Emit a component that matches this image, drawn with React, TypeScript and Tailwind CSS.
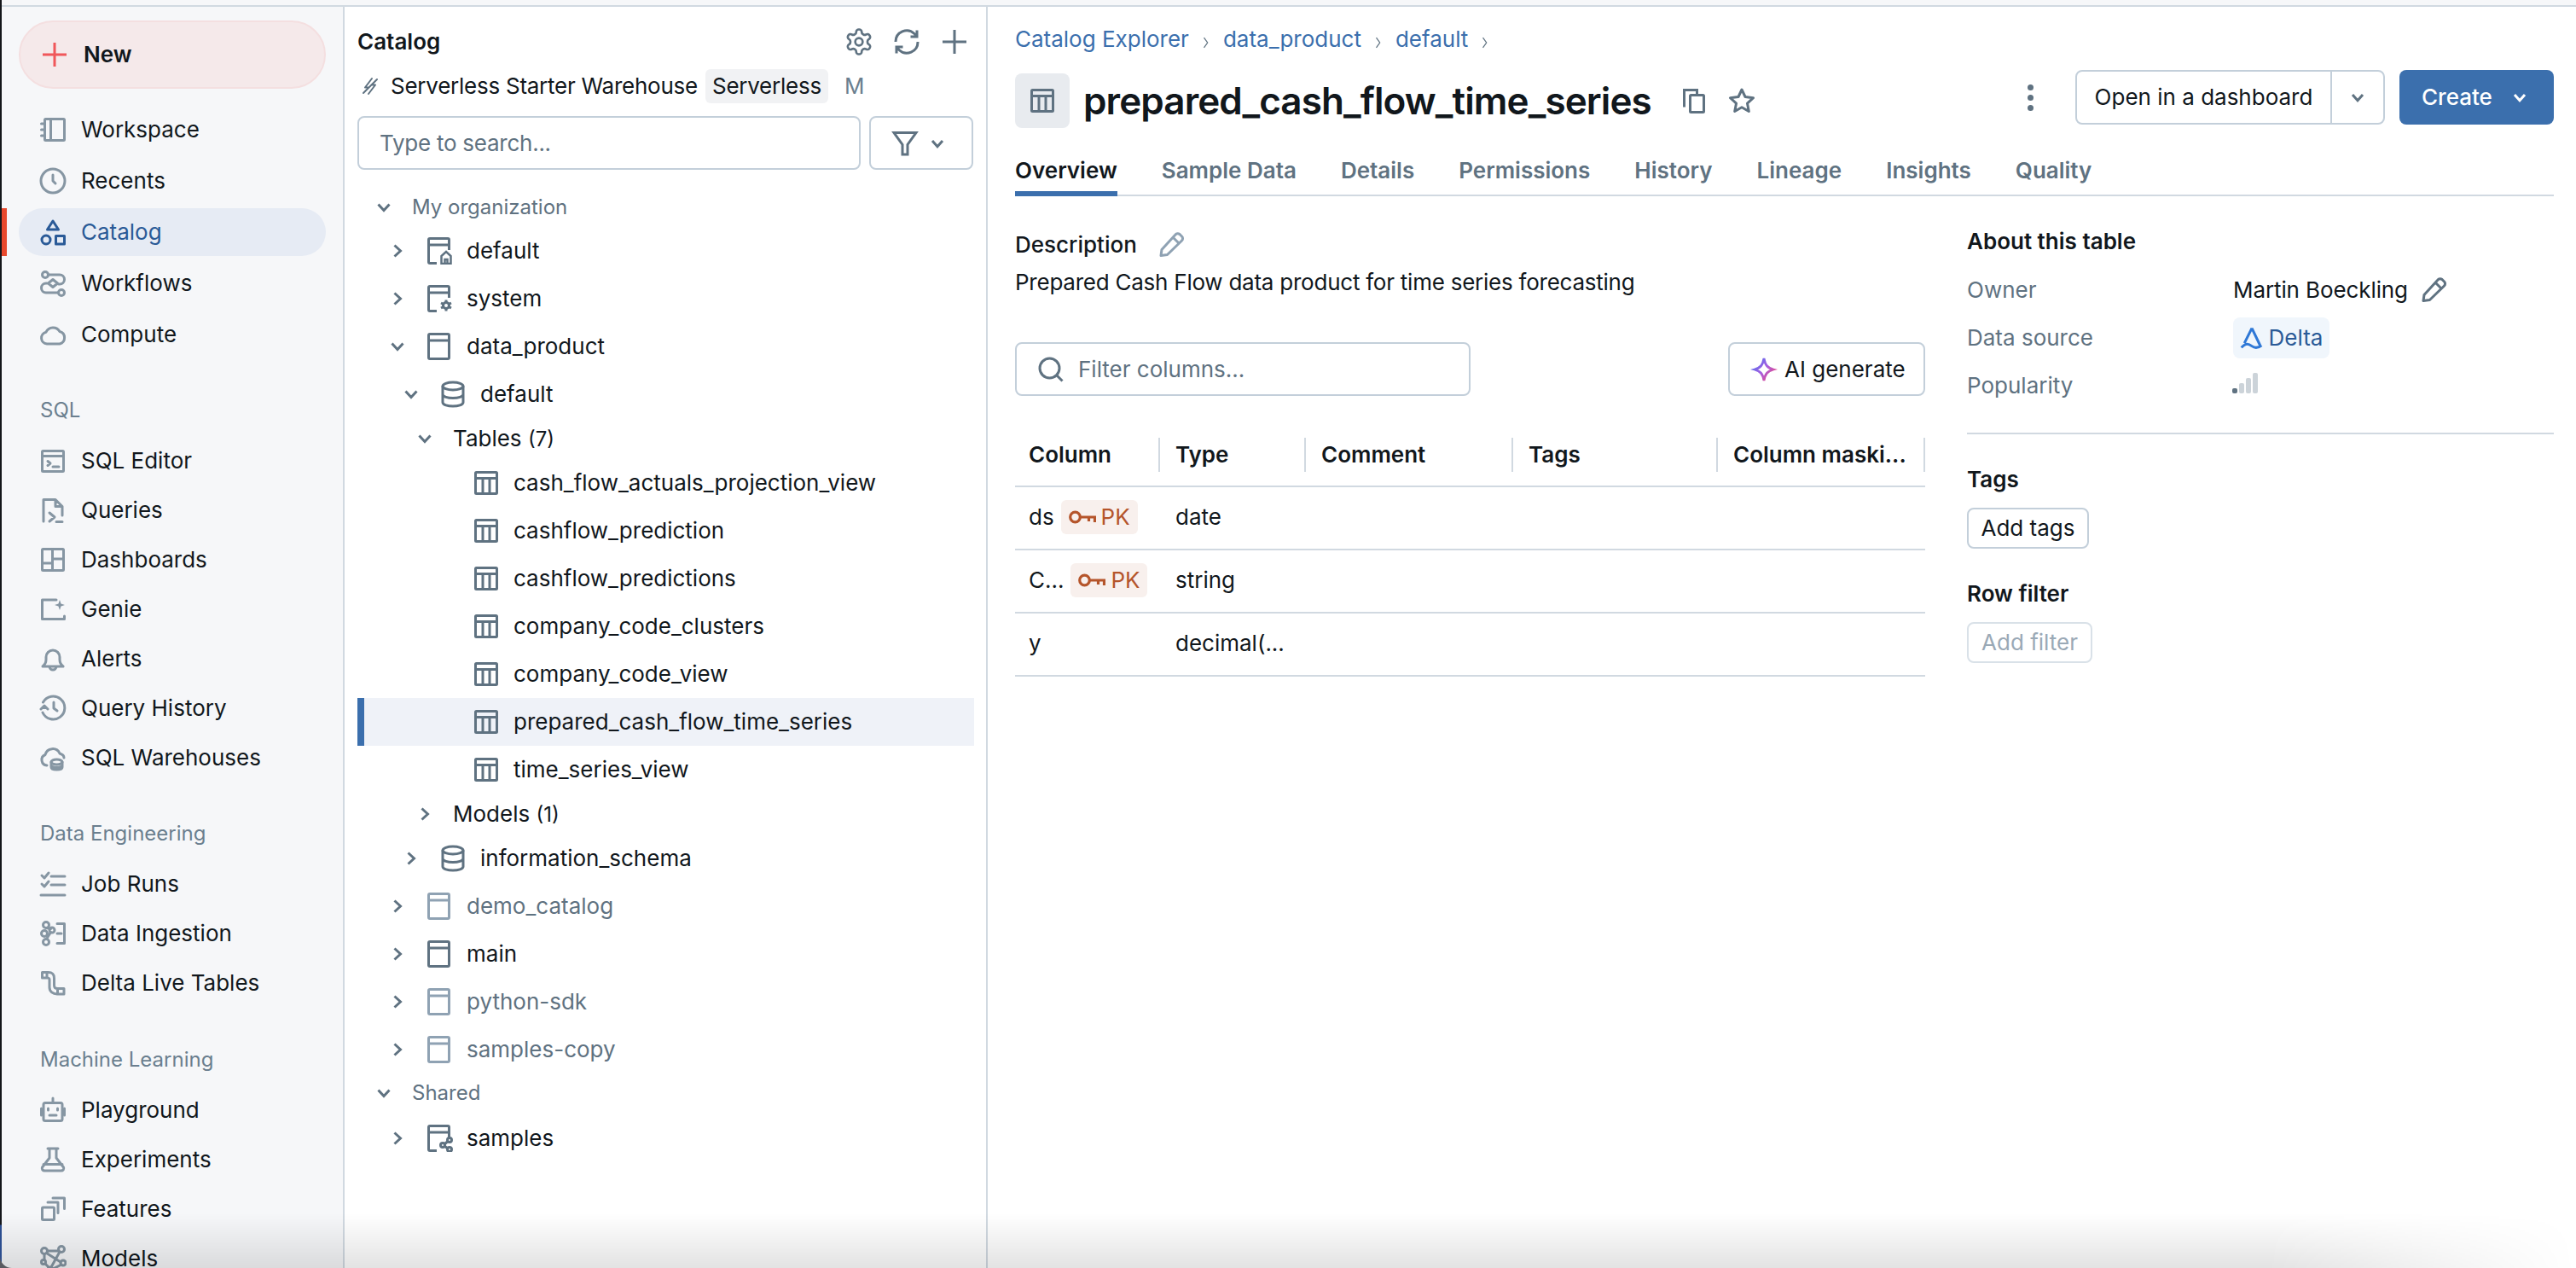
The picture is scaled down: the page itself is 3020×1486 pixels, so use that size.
import React from "react";

const cl = "fill-none stroke-current [stroke-width:3] [stroke-linecap:round] [stroke-linejoin:round]";
function I({ children, className = "" }: { children: React.ReactNode; className?: string }) {
  return (
    <svg viewBox="0 0 32 32" className={`w-8 h-8 shrink-0 ${cl} ${className}`}>
      {children}
    </svg>
  );
}

const Workspace = () => <I><rect x="6.5" y="3.5" width="23" height="25" rx="1" /><path d="M13.5 3.5v25M2.5 9h4M2.5 16h4M2.5 23h4" /></I>;
const Recents = () => <I><circle cx="16" cy="16" r="14" /><path d="M16 9v7l3 3" /></I>;
const CatalogI = () => <I><path d="M16 3l6.5 10h-13zM19.5 20.5h10v9.500h-10z" /><circle cx="8" cy="25" r="5" /></I>;
const Workflows = () => <I><circle cx="7" cy="6" r="3.500" /><circle cx="26" cy="27" r="3.500" /><path d="M10.500 6H24a5.500 5.500 0 0 1 0 11h-1M22 27H8a5.500 5.500 0 0 1 0-11h1M16 11.500l5.500 4.500-5.500 4.500-5.500-4.500z" /></I>;
const Compute = () => <I><path d="M9 27a7 7 0 0 1-1-13.800A9 9 0 0 1 24 12.500 7.500 7.500 0 0 1 24 27z" /></I>;
const SqlEditor = () => <I><rect x="3.500" y="4.500" width="25" height="24" rx="1" /><path d="M3.500 10.500h25M10 16.500l3 2.500-3 2.500M16 23h7" /></I>;
const Queries = () => <I><path d="M5 29V3.500h14l8 8V22M19 3.500v8h8M12 19l6 5-6 5M20 29.500h7" /></I>;
const Dashboards = () => <I><rect x="3.500" y="3.500" width="25" height="25" rx="1" /><path d="M15.500 3.500v25M15.500 15h13M3.500 20h12" /></I>;
const Genie = () => <I><path d="M20 5H3.500v22.500h26V24" /><path d="M24 5l1.500 4.500L30 11l-4.500 1.500L24 17l-1.500-4.500L18 11l4.500-1.500z" className="fill-current stroke-none" /></I>;
const Alerts = () => <I><path d="M4 25c2.500-2 4-4 4-8v-3a8 8 0 0 1 16 0v3c0 4 1.500 6 4 8zM12 25a4 4 0 0 0 8 0" /></I>;
const History = () => <I><path d="M4.500 9A13.500 13.500 0 1 1 4 21" /><path d="M2 17l4-4 4 4" className="fill-current" /><path d="M17 9v7l4 3" /></I>;
const Warehouses = () => <I><path d="M9 25a6.500 6.500 0 0 1-2-12.500A9 9 0 0 1 24 11c3 1 5 3 5 5" /><ellipse cx="20.500" cy="21" rx="6.500" ry="3" /><path d="M14 21v6c0 4 13 4 13 0v-6M14 25c0 3 13 3 13 0" /></I>;
const JobRuns = () => <I><path d="M14 7h16M14 17h16M2 29h28M3 6l3 3 5-6M3 16l3 3 5-6" /></I>;
const Ingestion = () => <I><circle cx="8" cy="6" r="3.500" /><circle cx="8" cy="26" r="3.500" /><circle cx="6" cy="16" r="3.500" /><circle cx="15" cy="12" r="3" /><path d="M8.500 9.500l5 1M8.500 22.500l5-8M21 4.500h8.500v23H21M21 16h5" /></I>;
const Dlt = () => <I><path d="M3.500 3.500h7c5 0 7 2 7 7v8c0 3 1 4 4 4H29v6.500h-8c-5 0-9-3-9-8v-9c0-2-1-2-3-2H3.500zM9 3.500v6M21.500 22.500v6.500" /></I>;
const Playground = () => <I><rect x="5" y="7.500" width="22" height="21" rx="2" /><path d="M16 2v5M2.500 14v8M29.500 14v8M12 22h8" /><path d="M10.500 14v2M21.500 14v2" /></I>;
const Experiments = () => <I><path d="M10 3h12M12 3v11L3.500 25c-1 2 .5 4 3 4h19c2.500 0 4-2 3-4L20 14V3M5 21.500h22" /></I>;
const Features = () => <I><rect x="3.500" y="14" width="14" height="14.500" rx="1" /><path d="M10 8h12v12.500M16 3h13.500v12.500" /></I>;
const Models = () => <I><circle cx="6" cy="7" r="3.500" /><circle cx="26" cy="5" r="3.500" /><circle cx="5" cy="20" r="2.500" /><circle cx="13" cy="29" r="3" /><circle cx="28" cy="21" r="3" /><path d="M9.500 7h13M8.500 9.500L25 20M24 8l-10 18M6 17V11M7 22l4 4M16 28l10-5" /></I>;

function NavItem({ icon, label }: { icon: React.ReactNode; label: string }) {
  return (
    <div className="flex items-center gap-[17px] h-[58px] pl-[44px] text-[#11171c]">
      <span className="text-[#8696a3] flex">{icon}</span>
      <span>{label}</span>
    </div>
  );
}

function SectionLabel({ children, className = "" }: { children: React.ReactNode; className?: string }) {
  return <div className={`h-[32px] flex items-center pl-[45px] text-[24px] text-[#6b7f8f] ${className}`}>{children}</div>;
}

function Sidebar() {
  return (
    <aside className="w-[400px] shrink-0 border-r-2 border-[#d1d9e1] bg-[#f6f7f9] box-content overflow-hidden">
      <div className="mx-[20px] mt-[16px] h-[80px] rounded-[40px] bg-[#f5e9ea] border-2 border-[#f4dfe0] flex items-center gap-[18px] pl-[24px] font-semibold text-[#11171c]">
        <svg viewBox="0 0 32 32" className="w-8 h-8 shrink-0 fill-none stroke-[#f0575a] [stroke-width:3]"><path d="M16 2v28M2 16h28" /></svg>
        <span>New</span>
      </div>
      <div className="mt-[18px]">
        <div className="flex items-center gap-[17px] h-[60px] pl-[44px] text-[#11171c]"><span className="text-[#8696a3] flex"><Workspace /></span>Workspace</div>
        <div className="flex items-center gap-[17px] h-[60px] pl-[44px] text-[#11171c]"><span className="text-[#8696a3] flex"><Recents /></span>Recents</div>
        <div className="relative h-[60px] flex items-center">
          <div className="absolute left-0 top-[2px] h-[56px] w-[6px] bg-[#e9492d]" />
          <div className="mx-[20px] flex-1 h-[56px] rounded-[28px] bg-[#e6ebf4] flex items-center gap-[17px] pl-[24px] text-[#2a5a97]"><span className="flex"><CatalogI /></span>Catalog</div>
        </div>
        <div className="flex items-center gap-[17px] h-[60px] pl-[44px] text-[#11171c]"><span className="text-[#8696a3] flex"><Workflows /></span>Workflows</div>
        <div className="flex items-center gap-[17px] h-[60px] pl-[44px] text-[#11171c]"><span className="text-[#8696a3] flex"><Compute /></span>Compute</div>
      </div>
      <SectionLabel className="mt-[43px]">SQL</SectionLabel>
      <div className="mt-[14px]">
        <NavItem icon={<SqlEditor />} label="SQL Editor" />
        <NavItem icon={<Queries />} label="Queries" />
        <NavItem icon={<Dashboards />} label="Dashboards" />
        <NavItem icon={<Genie />} label="Genie" />
        <NavItem icon={<Alerts />} label="Alerts" />
        <NavItem icon={<History />} label="Query History" />
        <NavItem icon={<Warehouses />} label="SQL Warehouses" />
      </div>
      <SectionLabel className="mt-[44px]">Data Engineering</SectionLabel>
      <div className="mt-[14px]">
        <NavItem icon={<JobRuns />} label="Job Runs" />
        <NavItem icon={<Ingestion />} label="Data Ingestion" />
        <NavItem icon={<Dlt />} label="Delta Live Tables" />
      </div>
      <SectionLabel className="mt-[45px]">Machine Learning</SectionLabel>
      <div className="mt-[14px]">
        <NavItem icon={<Playground />} label="Playground" />
        <NavItem icon={<Experiments />} label="Experiments" />
        <NavItem icon={<Features />} label="Features" />
        <NavItem icon={<Models />} label="Models" />
      </div>
    </aside>
  );
}

const ChevDown = ({ className = "" }: { className?: string }) => (
  <svg viewBox="0 0 32 32" className={`w-8 h-8 shrink-0 fill-none stroke-current [stroke-width:3] ${className}`}><path d="M9.500 12.500l6.500 7 6.500-7" /></svg>
);
const ChevRight = ({ className = "" }: { className?: string }) => (
  <svg viewBox="0 0 32 32" className={`w-8 h-8 shrink-0 fill-none stroke-current [stroke-width:3] ${className}`}><path d="M12.500 9.500l7 6.500-7 6.500" /></svg>
);

const CatalogBase = ({ variant }: { variant?: "home" | "gear" | "share" }) => (
  <svg viewBox="0 0 32 32" className="w-8 h-8 shrink-0 fill-none stroke-current [stroke-width:3]">
    {variant ? <path d="M13 30.500H5a1.500 1.500 0 0 1-1.500-1.500V3A1.500 1.500 0 0 1 5 1.500h21A1.500 1.500 0 0 1 27.500 3v12M3.500 9h24" /> : <path d="M5 1.500h21A1.500 1.500 0 0 1 27.500 3v26a1.500 1.500 0 0 1-1.500 1.500H5A1.500 1.500 0 0 1 3.500 29V3A1.500 1.500 0 0 1 5 1.500zM3.500 9h24" />}
    {variant === "home" && <path d="M18.500 31v-9l5.500-5 5.500 5v9zM22.500 31v-5h3v5" className="[stroke-width:2.500]" />}
    {variant === "gear" && <><circle cx="24" cy="24" r="3.500" /><path d="M24 17.500v3M24 27.500v3M18 21l3 1.500M27 25.500l3 1.500M18 27l3-1.500M27 22.500l3-1.500" /></>}
    {variant === "share" && <><circle cx="28" cy="18" r="2.500" /><circle cx="28" cy="29" r="2.500" /><circle cx="20" cy="24" r="2.500" /><path d="M22 23l4-3.500M22 25l4 3" /></>}
  </svg>
);
const SchemaI = () => (
  <svg viewBox="0 0 32 32" className="w-8 h-8 shrink-0 fill-none stroke-current [stroke-width:3]">
    <ellipse cx="16" cy="6.500" rx="12" ry="4.500" />
    <path d="M4 6.500v19c0 6 24 6 24 0v-19M4 16c0 6 24 6 24 0" />
  </svg>
);
const TableI = ({ className = "w-8 h-8" }: { className?: string }) => (
  <svg viewBox="0 0 32 32" className={`shrink-0 fill-none stroke-current [stroke-width:3] ${className}`}>
    <rect x="3.500" y="3.500" width="25" height="25" rx="1" />
    <path d="M3.500 10.500h25M12 10.500v18M20 10.500v18" />
  </svg>
);

function Row({ pl, chev, icon, label, tone = "dark", h = "h-[56px]", gap = "gap-[16px]", selected, text = "" }: {
  pl: string; chev?: "down" | "right"; icon?: React.ReactNode; label: React.ReactNode; tone?: "dark" | "muted"; h?: string; gap?: string; selected?: boolean; text?: string;
}) {
  return (
    <div className={`flex items-center ${h} ${pl} ${selected ? "bg-[#eff2f8] shadow-[inset_8px_0_0_#3b6fad]" : ""} ${tone === "dark" ? "text-[#11171c]" : "text-[#5f7281]"}`}>
      {chev === "down" && <span className="text-[#5f7281] flex"><ChevDown /></span>}
      {chev === "right" && <span className="text-[#5f7281] flex"><ChevRight /></span>}
      <div className={`flex items-center ${gap} ${chev ? "ml-[17px]" : ""}`}>
        {icon}
        <span className={text}>{label}</span>
      </div>
    </div>
  );
}

function CatalogPane() {
  const g = "text-[#5f7281] flex";
  const l = "text-[#8fa2b3] flex";
  const tables = ["cash_flow_actuals_projection_view", "cashflow_prediction", "cashflow_predictions", "company_code_clusters", "company_code_view", "prepared_cash_flow_time_series", "time_series_view"];
  return (
    <section className="w-[737px] shrink-0 border-r-2 border-[#d1d9e1] box-content pl-[15px] overflow-hidden">
      <div className="w-[722px]">
        <div className="h-[40px] mt-[21px] flex items-center justify-between pr-[6px] text-[#5f7281]">
          <span className="font-semibold text-[#11171c]">Catalog</span>
          <div className="flex items-center gap-[24px]">
            <svg viewBox="1 1 22 22" className="w-8 h-8 fill-none stroke-current [stroke-width:1.800]"><circle cx="12" cy="12" r="3" /><path d="M12.220 2h-.44a2 2 0 0 0-2 2v.18a2 2 0 0 1-1 1.730l-.43.250a2 2 0 0 1-2 0l-.150-.08a2 2 0 0 0-2.730.730l-.22.380a2 2 0 0 0 .73 2.730l.150.100a2 2 0 0 1 1 1.720v.510a2 2 0 0 1-1 1.740l-.150.090a2 2 0 0 0-.73 2.730l.22.380a2 2 0 0 0 2.730.730l.150-.08a2 2 0 0 1 2 0l.430.250a2 2 0 0 1 1 1.730V20a2 2 0 0 0 2 2h.440a2 2 0 0 0 2-2v-.18a2 2 0 0 1 1-1.730l.430-.250a2 2 0 0 1 2 0l.150.080a2 2 0 0 0 2.730-.730l.220-.390a2 2 0 0 0-.730-2.730l-.150-.080a2 2 0 0 1-1-1.740v-.500a2 2 0 0 1 1-1.740l.150-.090a2 2 0 0 0 .730-2.730l-.220-.380a2 2 0 0 0-2.730-.730l-.150.080a2 2 0 0 1-2 0l-.430-.250a2 2 0 0 1-1-1.730V4a2 2 0 0 0-2-2z" /></svg>
            <svg viewBox="0 0 32 32" className="w-8 h-8 fill-none stroke-current [stroke-width:3]"><path d="M3 16A13 13 0 0 1 25 6.500L28 10M29 16A13 13 0 0 1 7 25.500L4 22M28 2.500V10h-7.500M4 29.500V22h7.500" /></svg>
            <svg viewBox="0 0 32 32" className="w-8 h-8 fill-none stroke-current [stroke-width:3]"><path d="M16 2v28M2 16h28" /></svg>
          </div>
        </div>
        <div className="h-[40px] mt-[12px] flex items-center text-[#11171c] tracking-[-0.25px]">
          <svg viewBox="0 0 24 24" className="ml-[3px] w-[24px] h-[24px] shrink-0 fill-none stroke-[#5f7281] [stroke-width:2] [stroke-linejoin:round] [stroke-linecap:round]"><path d="M14 3L6 13.500h3.500M10 21l8-10.500h-3.500M20 4L4 20" /></svg>
          <span className="ml-[12px] whitespace-nowrap">Serverless Starter Warehouse</span>
          <span className="ml-[9px] h-[40px] px-[8px] rounded-[6px] bg-[#f1f2f4] flex items-center">Serverless</span>
          <span className="ml-[19px] text-[#6b7f8f]">M</span>
        </div>
        <div className="mt-[15px] flex gap-[10px] h-[63px]">
          <div className="w-[590px] h-full border-2 border-[#c3cfda] rounded-[8px] flex items-center pl-[24px] text-[#5f7281] tracking-[-0.25px]">Type to search...</div>
          <div className="w-[122px] h-full border-2 border-[#c3cfda] rounded-[8px] flex items-center pl-[24px] text-[#5f7281]">
            <svg viewBox="0 0 32 32" className="w-8 h-8 fill-none stroke-current [stroke-width:3] shrink-0"><path d="M3 3.500h26L19 17.500V29h-6V17.500z" /></svg>
            <svg viewBox="0 0 32 32" className="ml-[10px] w-6 h-6 fill-none stroke-current [stroke-width:4] shrink-0"><path d="M8 12l8 9 8-9" /></svg>
          </div>
        </div>
      </div>
      <div className="w-[723px] mt-[21px]">
        <Row pl="pl-[15px]" chev="down" label="My organization" tone="muted" h="h-[46px]" text="text-[24px]" />
        <Row pl="pl-[31px]" chev="right" icon={<span className={g}><CatalogBase variant="home" /></span>} label="default" />
        <Row pl="pl-[31px]" chev="right" icon={<span className={g}><CatalogBase variant="gear" /></span>} label="system" />
        <Row pl="pl-[31px]" chev="down" icon={<span className={g}><CatalogBase /></span>} label="data_product" />
        <Row pl="pl-[47px]" chev="down" icon={<span className={g}><SchemaI /></span>} label="default" />
        <Row pl="pl-[63px]" chev="down" label={<>Tables <span className="text-[24px]">(7)</span></>} h="h-[48px]" />
        {tables.map((t) => (
          <Row key={t} pl="pl-[135px]" icon={<span className={g}><TableI /></span>} label={t} selected={t === "prepared_cash_flow_time_series"} />
        ))}
        <Row pl="pl-[63px]" chev="right" label={<>Models <span className="text-[24px]">(1)</span></>} h="h-[48px]" />
        <Row pl="pl-[47px]" chev="right" icon={<span className={g}><SchemaI /></span>} label="information_schema" />
        <Row pl="pl-[31px]" chev="right" icon={<span className={l}><CatalogBase /></span>} label="demo_catalog" tone="muted" />
        <Row pl="pl-[31px]" chev="right" icon={<span className={g}><CatalogBase /></span>} label="main" />
        <Row pl="pl-[31px]" chev="right" icon={<span className={l}><CatalogBase /></span>} label="python-sdk" tone="muted" />
        <Row pl="pl-[31px]" chev="right" icon={<span className={l}><CatalogBase /></span>} label="samples-copy" tone="muted" />
        <Row pl="pl-[15px]" chev="down" label="Shared" tone="muted" h="h-[46px]" text="text-[24px]" />
        <div className="mt-[2px]">
          <Row pl="pl-[31px]" chev="right" icon={<span className={g}><CatalogBase variant="share" /></span>} label="samples" />
        </div>
      </div>
    </section>
  );
}

const Sep = () => (
  <svg viewBox="0 0 12 20" className="w-[10px] h-[18px] mt-[8px] fill-none stroke-[#5f7281] [stroke-width:1.500]"><path d="M3 3l5 7-5 7" /></svg>
);

const Pencil = ({ className = "" }: { className?: string }) => (
  <svg viewBox="0 0 32 32" className={`w-8 h-8 shrink-0 fill-none stroke-current [stroke-width:3] [stroke-linejoin:round] ${className}`}><path d="M4 28.500l1-7L21 4a3.500 3.500 0 0 1 5-.5l2.500 2.500a3.500 3.500 0 0 1 0 5L11.500 27.500zM18 7l7.500 7.500" /></svg>
);

const Key = () => (
  <svg viewBox="0 0 32 18" className="w-[32px] h-[18px] shrink-0 fill-none stroke-current [stroke-width:3.200]"><circle cx="7.500" cy="9" r="5.800" /><path d="M13 9h17.500v6M23.500 9v5" /></svg>
);
const PK = () => (
  <span className="inline-flex items-center gap-[6px] h-[40px] w-[90px] justify-center rounded-[6px] bg-[#f8f0ed] text-[#b5552b]"><Key />PK</span>
);

function TH({ children, pl = "pl-[16px]" }: { children?: React.ReactNode; pl?: string }) {
  return <div className={`h-[40px] flex items-center border-r-2 border-[#d1d9e1] font-semibold whitespace-nowrap overflow-hidden ${pl}`}>{children}</div>;
}

function TableRow({ col, type }: { col: React.ReactNode; type: string }) {
  return (
    <div className="grid grid-cols-[170px_171px_243px_240px_243px] h-[74px] pb-[2px] border-b-2 border-[#d1d9e1] items-center">
      <div className="pl-[16px] flex items-center gap-[8px]">{col}</div>
      <div className="pl-[18px]">{type}</div>
    </div>
  );
}

function Main() {
  const tabs = ["Sample Data", "Details", "Permissions", "History", "Lineage", "Insights", "Quality"];
  return (
    <main className="flex-1 pl-[32px] pr-[26px] min-w-0 text-[#11171c]">
      <div className="pt-[20px] h-[56px] flex items-center gap-[15px] text-[#3b6fad]">
        <span>Catalog Explorer</span><Sep />
        <span>data_product</span><Sep />
        <span>default</span><Sep />
      </div>
      <div className="mt-[18px] h-[68px] flex items-start justify-between">
        <div className="mt-[4px] flex items-center">
          <div className="w-[64px] h-[64px] rounded-[8px] bg-[#e8ebef] flex items-center justify-center text-[#5f7281]"><TableI /></div>
          <h1 className="ml-[16px] text-[44px] font-semibold leading-[64px] tracking-[-0.9px]">prepared_cash_flow_time_series</h1>
          <svg viewBox="0 0 32 32" className="ml-[34px] w-8 h-8 fill-none stroke-[#5f7281] [stroke-width:3]"><path d="M6 22H4.500V3.500h15V9" /><rect x="11.500" y="9.500" width="16" height="20" rx="1" /></svg>
          <svg viewBox="0 0 32 32" className="ml-[24px] w-8 h-8 fill-none stroke-[#5f7281] [stroke-width:3] [stroke-linejoin:round]"><path d="M16 3l4 8.500 9.500 1.200-7 6.500 1.800 9.300-8.300-4.700-8.300 4.700 1.800-9.300-7-6.500 9.500-1.200z" /></svg>
        </div>
        <div className="flex items-center">
          <div className="flex flex-col gap-[5px] mr-[49px]">
            <span className="w-[7px] h-[7px] rounded-full bg-[#5f7281]" />
            <span className="w-[7px] h-[7px] rounded-full bg-[#5f7281]" />
            <span className="w-[7px] h-[7px] rounded-full bg-[#5f7281]" />
          </div>
          <div className="h-[64px] w-[363px] border-2 border-[#c3cfda] rounded-[8px] flex items-center">
            <div className="w-[299px] text-center border-r-2 border-[#c3cfda] h-full flex items-center justify-center">Open in a dashboard</div>
            <div className="flex-1 flex justify-center text-[#5f7281]"><svg viewBox="0 0 32 32" className="w-6 h-6 fill-none stroke-current [stroke-width:4]"><path d="M8 12l8 9 8-9" /></svg></div>
          </div>
          <div className="ml-[17px] h-[64px] w-[181px] rounded-[8px] bg-[#3b6fad] text-white flex items-center pl-[26px] font-medium">
            Create
            <svg viewBox="0 0 32 32" className="ml-[20px] w-6 h-6 fill-none stroke-current [stroke-width:4]"><path d="M8 12l8 9 8-9" /></svg>
          </div>
        </div>
      </div>
      <div className="mt-[20px] h-[60px] flex gap-[52px] border-b-2 border-[#d1d9e1]">
        <div className="h-[60px] border-b-[6px] border-[#3b6fad] pt-[12px] font-semibold">Overview</div>
        {tabs.map((t) => <div key={t} className="pt-[12px] font-semibold text-[#5f7281]">{t}</div>)}
      </div>
      <div className="flex gap-[49px]">
        <div className="w-[1067px] shrink-0">
          <div className="mt-[39px] h-[36px] flex items-center gap-[24px] font-medium">
            <span>Description</span>
            <span className="text-[#8fa2b3] flex"><Pencil /></span>
          </div>
          <div className="mt-[8px] h-[36px] flex items-center tracking-[-0.24px]">Prepared Cash Flow data product for time series forecasting</div>
          <div className="mt-[52px] h-[63px] flex justify-between">
            <div className="w-[534px] border-2 border-[#c3cfda] rounded-[8px] flex items-center pl-[24px] gap-[16px] text-[#5f7281]">
              <svg viewBox="0 0 32 32" className="w-8 h-8 fill-none stroke-current [stroke-width:3]"><circle cx="14.500" cy="14.500" r="11.500" /><path d="M23 23l6.500 6.500" /></svg>
              Filter columns...
            </div>
            <div className="w-[231px] border-2 border-[#c3cfda] rounded-[8px] flex items-center pl-[24px] gap-[8px]">
              <svg viewBox="0 0 32 32" className="w-8 h-8 shrink-0 fill-none [stroke-width:2.800]">
                <defs><linearGradient id="ai" x1="0" y1="0" x2="1" y2="1"><stop offset="0" stopColor="#4a6ff0" /><stop offset="0.5" stopColor="#a65fe0" /><stop offset="1" stopColor="#f0457a" /></linearGradient></defs>
                <path d="M16 3c1.500 8 4 11 11 13-7 2-9.500 5-11 13-1.500-8-4-11-11-13 7-2 9.500-5 11-13z" stroke="url(#ai)" />
              </svg>
              AI generate
            </div>
          </div>
          <div className="mt-[49px] pb-[16px] grid grid-cols-[170px_171px_243px_240px_243px] border-b-2 border-[#d1d9e1] w-[1067px]">
            <TH>Column</TH>
            <TH pl="pl-[18px]">Type</TH>
            <TH pl="pl-[18px]">Comment</TH>
            <TH pl="pl-[18px]">Tags</TH>
            <TH pl="pl-[18px]">Column maski...</TH>
          </div>
          <TableRow col={<><span>ds</span><PK /></>} type="date" />
          <TableRow col={<><span>C...</span><PK /></>} type="string" />
          <TableRow col={<span>y</span>} type="decimal(..." />
        </div>
        <div className="flex-1 min-w-0">
          <div className="mt-[35px] h-[36px] flex items-center font-semibold">About this table</div>
          <div className="mt-[11px] h-[56px] flex items-center">
            <span className="w-[312px] text-[#5f7281]">Owner</span>
            <span className="tracking-[-0.1px]">Martin Boeckling</span>
            <span className="ml-[14px] text-[#5f7281] flex"><Pencil /></span>
          </div>
          <div className="h-[56px] flex items-center">
            <span className="w-[312px] text-[#5f7281]">Data source</span>
            <span className="h-[48px] w-[113px] rounded-[8px] bg-[#f0f6fc] flex items-center justify-center gap-[6px] text-[#2a5a97]">
              <svg viewBox="0 0 32 32" className="w-[28px] h-[28px] shrink-0 fill-none stroke-[#2f78d6] [stroke-width:3.500]"><path d="M16 3L6 23M16 3l11 23M2 29c6-7 10-5 14-2 4 3 8 3 13-1" /></svg>
              Delta
            </span>
          </div>
          <div className="h-[56px] flex items-center">
            <span className="w-[311px] text-[#5f7281]">Popularity</span>
            <span className="flex items-end gap-[2px] h-[24px] -mt-[6px]">
              <span className="w-[6px] h-[6px] rounded-[2px] bg-[#5f7281]" />
              <span className="w-[6px] h-[12px] rounded-[2px] bg-[#ccd3d9]" />
              <span className="w-[6px] h-[18px] rounded-[2px] bg-[#ccd3d9]" />
              <span className="w-[6px] h-[24px] rounded-[2px] bg-[#ccd3d9]" />
            </span>
          </div>
          <div className="mt-[27px] border-t-2 border-[#d1d9e1]" />
          <div className="mt-[35px] h-[36px] flex items-center font-semibold">Tags</div>
          <div className="mt-[15px] h-[48px] w-[143px] border-2 border-[#c3cfda] rounded-[8px] flex items-center justify-center">Add tags</div>
          <div className="mt-[35px] h-[36px] flex items-center font-semibold">Row filter</div>
          <div className="mt-[15px] h-[48px] w-[147px] border-2 border-[#d9e1e8] rounded-[8px] flex items-center justify-center text-[#9aa9b6]">Add filter</div>
        </div>
      </div>
    </main>
  );
}

export default function App() {
  return (
    <div className="relative w-[3020px] h-[1486px] overflow-hidden bg-white font-['Inter',sans-serif] text-[26px] leading-[36px] text-[#11171c]">
      <div className="h-[8px] ml-[2px] bg-[#f6f7f9] border-b-2 border-[#d1d9e1]" />
      <div className="flex h-[1478px] ml-[2px]">
        <Sidebar />
        <CatalogPane />
        <Main />
      </div>
      <div className="absolute left-0 top-0 bottom-0 w-[2px] bg-[linear-gradient(to_bottom,#14161a_1435px,#2b4d8f_1436px)]" />
      <div className="absolute left-[2px] right-0 bottom-0 h-[64px] bg-gradient-to-b from-transparent to-[#0000001c] pointer-events-none [mask-image:linear-gradient(to_right,black_88%,transparent)]" />
      <svg viewBox="0 0 14 14" className="absolute left-0 bottom-0 w-[14px] h-[14px] fill-[#5a5a60]"><path d="M0 0A14 14 0 0 0 14 14H0z" /></svg>
    </div>
  );
}
